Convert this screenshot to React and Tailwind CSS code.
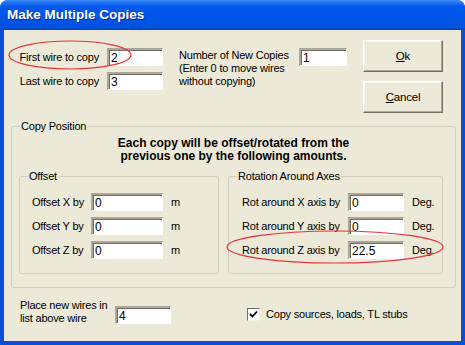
import React from 'react';

const font = { fontFamily: '"Liberation Sans", Arial, sans-serif' };

function Field({ value, className = '' }) {
  return (
    <div
      className={`h-[18px] bg-white border-t-2 border-l-2 border-b border-r border-t-[#aca899] border-l-[#aca899] border-b-white border-r-white shadow-[inset_1px_1px_0_#716f64] pl-[2px] text-[12px] leading-[16px] tracking-normal text-black ${className}`}
    >
      {value}
    </div>
  );
}

function Button({ children }) {
  return (
    <div className="w-[80px] h-[32px] flex items-center justify-center bg-[#ece9d8] border border-t-white border-l-white border-r-[#716f64] border-b-[#716f64] shadow-[inset_-1px_-1px_0_#aca899,inset_1px_1px_0_#f5f4ee] text-[11.5px] text-black">
      {children}
    </div>
  );
}

function Group({ label, className = '', children }) {
  return (
    <div className={`relative border border-[#d0d0bf] rounded-[3px] ${className}`}>
      <span className="absolute -top-[8px] left-[8px] px-[1px] bg-[#ece9d8] text-[11px] leading-[14px]">
        {label}
      </span>
      {children}
    </div>
  );
}

function Row({ label, value, unit, labelW, inputW, unitGap }) {
  return (
    <div className="flex items-center h-[18px]">
      <span className={labelW}>{label}</span>
      <Field value={value} className={inputW} />
      <span className={unitGap}>{unit}</span>
    </div>
  );
}

export default function App() {
  return (
    <div className="relative w-[465px] h-[345px] bg-[#0a4fd6] rounded-t-[8px] flex flex-col overflow-hidden" style={font}>
      <div className="h-[30px] shrink-0 flex items-center pl-[7px] bg-[linear-gradient(to_bottom,#3a8cf8_0%,#1f6ff0_10%,#0058ee_22%,#0055e8_60%,#0052e0_88%,#0043c0_100%)]">
        <span className="text-white font-bold text-[13.5px] [text-shadow:1px_1px_0_#0a2a8a] pt-[1px]">
          Make Multiple Copies
        </span>
      </div>
      <div className="flex-1 mx-[4px] mb-[4px] bg-[#ece9d8] text-black text-[11px] leading-[13px] tracking-[-0.2px] flex flex-col pl-[7px]">
        {/* top area */}
        <div className="flex items-start pt-[10px] h-[83px]">
          <div className="flex flex-col gap-[6px] mt-[8px] -ml-[7px]">
            <div className="flex items-center h-[18px]">
              <span className="w-[96px] text-right pr-[1px]">First wire to copy</span>
              <Field value="2" className="ml-[7px] w-[56px]" />
            </div>
            <div className="flex items-center h-[18px]">
              <span className="w-[96px] text-right pr-[1px]">Last wire to copy</span>
              <Field value="3" className="ml-[7px] w-[56px]" />
            </div>
          </div>
          <div className="flex items-start mt-[8px] ml-[16px]">
            <div className="w-[120px] pt-[1px] leading-[13px]">
              Number of New Copies
              <br />
              (Enter 0 to move wires
              <br />
              without copying)
            </div>
            <Field value="1" className="w-[48px]" />
          </div>
          <div className="flex flex-col gap-[9px] ml-[16px]">
            <Button>
              <span><span className="underline">O</span>k</span>
            </Button>
            <Button>
              <span><span className="underline">C</span>ancel</span>
            </Button>
          </div>
        </div>

        {/* copy position */}
        <Group label="Copy Position" className="mt-[13px] w-[445px] h-[162px]">
          <div className="mt-[10px] text-center font-bold text-[12px] leading-[13px] tracking-normal">
            Each copy will be offset/rotated from the
            <br />
            previous one by the following amounts.
          </div>
          <div className="flex gap-[9px] mt-[13px] ml-[7px]">
            <Group label="Offset" className="w-[200px] h-[98px]">
              <div className="flex flex-col gap-[6px] mt-[16px] ml-[12px]">
                <Row label="Offset X by" value="0" unit="m" labelW="w-[59px]" inputW="w-[72px]" unitGap="ml-[8px]" />
                <Row label="Offset Y by" value="0" unit="m" labelW="w-[59px]" inputW="w-[72px]" unitGap="ml-[8px]" />
                <Row label="Offset Z by" value="0" unit="m" labelW="w-[59px]" inputW="w-[72px]" unitGap="ml-[8px]" />
              </div>
            </Group>
            <Group label="Rotation Around Axes" className="w-[215px] h-[98px]">
              <div className="flex flex-col gap-[6px] mt-[16px] ml-[13px]">
                <Row label="Rot around X axis by" value="0" unit="Deg." labelW="w-[106px]" inputW="w-[56px]" unitGap="ml-[8px]" />
                <Row label="Rot around Y axis by" value="0" unit="Deg." labelW="w-[106px]" inputW="w-[56px]" unitGap="ml-[8px]" />
                <Row label="Rot around Z axis by" value="22.5" unit="Deg." labelW="w-[106px]" inputW="w-[56px]" unitGap="ml-[8px]" />
              </div>
            </Group>
          </div>
        </Group>

        {/* bottom */}
        <div className="flex items-center mt-[11px] ml-[9px]">
          <div className="w-[95px] leading-[13px]">
            Place new wires in
            <br />
            list above wire
          </div>
          <Field value="4" className="w-[56px] mt-[6px]" />
          <div className="flex items-center ml-[76px] mt-[4px]">
            <div className="w-[13px] h-[13px] bg-white border border-t-[#716f64] border-l-[#716f64] border-b-[#f1efe2] border-r-[#f1efe2] flex items-center justify-center">
              <svg width="9" height="9" viewBox="0 0 9 9">
                <path d="M1 4 L3.5 6.5 L8 1.5" stroke="#000" strokeWidth="1.8" fill="none" />
              </svg>
            </div>
            <span className="ml-[6px]">Copy sources, loads, TL stubs</span>
          </div>
        </div>
      </div>

      {/* red annotations */}
      <svg className="absolute left-0 top-0 pointer-events-none" width="465" height="345">
        <ellipse cx="70" cy="55" rx="61" ry="14" fill="none" stroke="#e3343a" strokeWidth="1.2" />
        <ellipse cx="335" cy="247" rx="108" ry="16" fill="none" stroke="#e3343a" strokeWidth="1.2" />
      </svg>
    </div>
  );
}
